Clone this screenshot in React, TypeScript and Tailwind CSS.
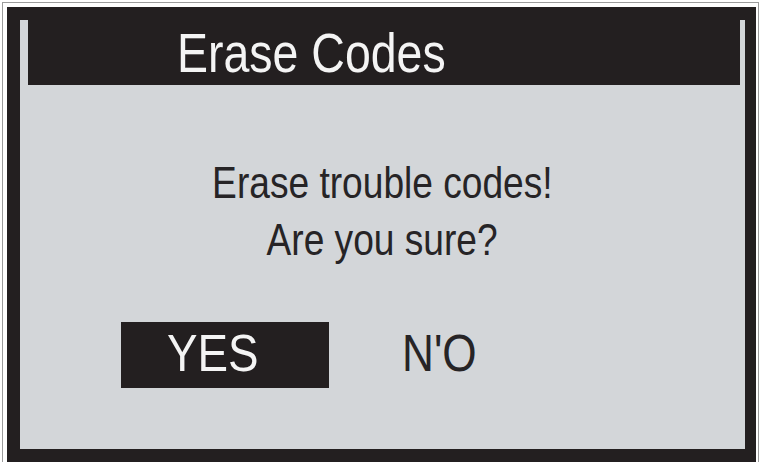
import React from 'react';

// no narrow face installed, so Liberation Sans gets squeezed horizontally
const face = { fontFamily: "'Liberation Sans', Arial, sans-serif" };

export default function App() {
    return (
        <div className="w-[762px] h-[462px] bg-white overflow-hidden pt-[2px] pl-[2px] pr-[3px]">
            {/* outer thin frame line */}
            <div className="h-full border-t border-l border-r border-[#9c9c9c] pt-[4px] pl-[4px] pr-[2px]">
                {/* device screen bezel */}
                <div className="h-full flex flex-col bg-[#231f20] pt-[13px] pl-[13px] pr-[11px] pb-[13px]">
                    <div className="flex-1 flex flex-col bg-[#d3d6d9]" style={face}>
                        {/* title bar */}
                        <div className="ml-[8px] mr-[5px] h-[65px] bg-[#231f20] pl-[149px]">
                            <h1 className="inline-block origin-left scale-x-[0.83] whitespace-nowrap text-[56px] leading-[65px] text-[#f4f4f4]">
                                Erase Codes
                            </h1>
                        </div>

                        {/* message */}
                        <div className="mt-[69px] flex flex-col items-center text-[45px] leading-[57px] text-[#262426]">
                            <p className="scale-x-[0.825] whitespace-nowrap">Erase trouble codes!</p>
                            <p className="scale-x-[0.825] whitespace-nowrap">Are you sure?</p>
                        </div>

                        {/* choices */}
                        <div className="mt-[54px] ml-[101px] flex items-start gap-[73px] text-[52px] leading-[62px]">
                            <div className="w-[208px] h-[66px] bg-[#231f20] pl-[46px] text-[#f4f4f4]">
                                <span className="inline-block origin-left scale-x-[0.88]">YES</span>
                            </div>
                            <div className="text-[#262426]">
                                <span className="inline-block origin-left scale-x-[0.85]">N'O</span>
                            </div>
                        </div>
                    </div>
                </div>
            </div>
        </div>
    );
}
